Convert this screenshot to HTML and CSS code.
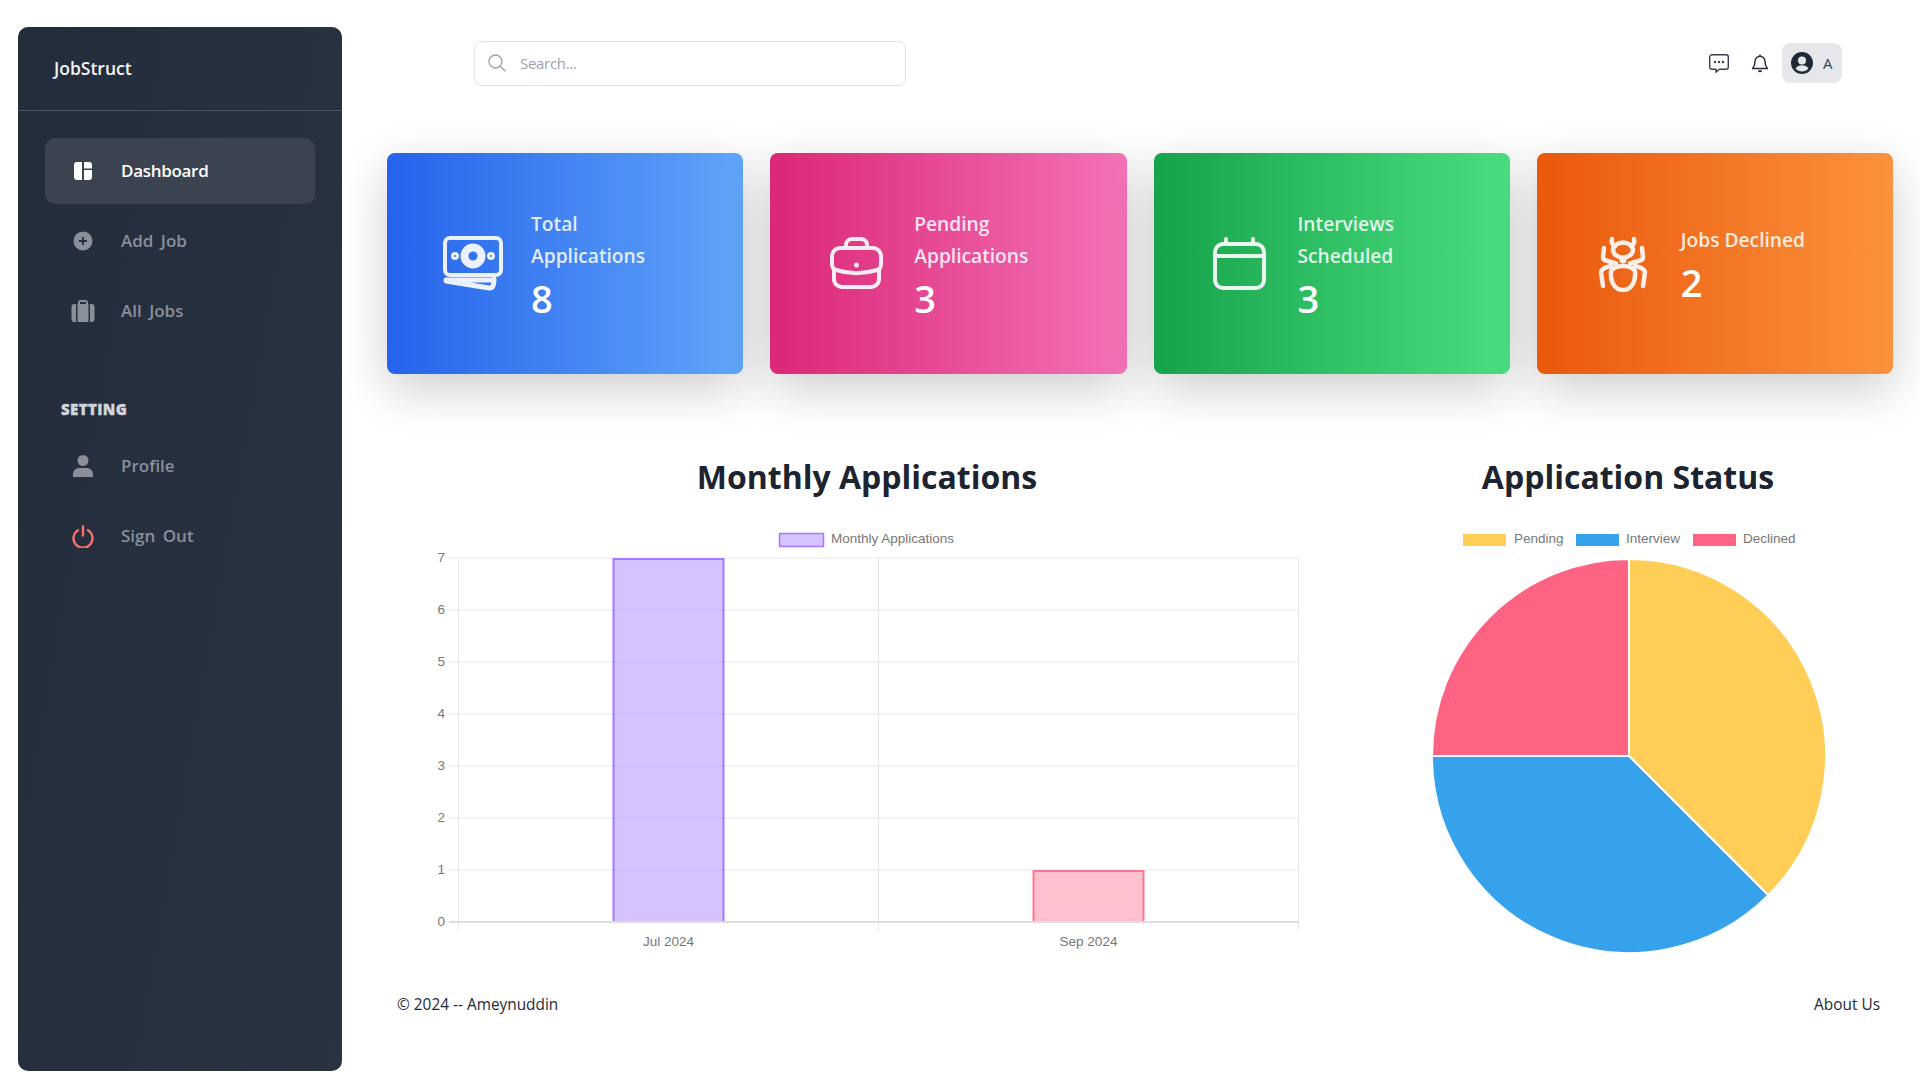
FILE: index.html
```html
<!DOCTYPE html>
<html lang="en">
<head>
    <meta charset="UTF-8">
    <meta name="viewport" content="width=device-width, initial-scale=1.0">
    <title>JobStruct</title>
    <link rel="stylesheet" href="styles.css">
</head>
<body>
    <div class="page">
        <aside class="sidebar">
            <div class="brand">JobStruct</div>
            <nav class="nav">
                <a class="nav-item active">
                    <span class="nav-icon">
                        <svg width="18" height="18" viewBox="0 0 18 18" fill="currentColor"><path d="M3 0h5v18H3a3 3 0 0 1-3-3V3a3 3 0 0 1 3-3z"/><path d="M10 0h5a3 3 0 0 1 3 3v3.500h-8z"/><path d="M10 8h8v7a3 3 0 0 1-3 3h-5z"/></svg>
                    </span>
                    <span class="nav-label">Dashboard</span>
                </a>
                <a class="nav-item">
                    <span class="nav-icon">
                        <svg width="20" height="20" viewBox="0 0 20 20"><circle cx="10" cy="10" r="9.500" fill="currentColor"/><path d="M10 6v8M6 10h8" stroke="#252e3d" stroke-width="1.800"/></svg>
                    </span>
                    <span class="nav-label">Add Job</span>
                </a>
                <a class="nav-item">
                    <span class="nav-icon">
                        <svg width="24" height="22" viewBox="0 0 24 22" fill="currentColor"><path d="M5 4H3.500A3 3 0 0 0 .5 7v12a3 3 0 0 0 3 3H5z"/><path d="M19 4h1.500a3 3 0 0 1 3 3v12a3 3 0 0 1-3 3H19z"/><path d="M7 4V2.500A2.500 2.500 0 0 1 9.500 0h5A2.500 2.500 0 0 1 17 2.500V4h.5v18h-11V4zm2 0h6V2.500a.5.5 0 0 0-.5-.5h-5a.5.5 0 0 0-.5.5z"/></svg>
                    </span>
                    <span class="nav-label">All Jobs</span>
                </a>
                <div class="nav-heading">SETTING</div>
                <a class="nav-item">
                    <span class="nav-icon">
                        <svg width="20" height="22" viewBox="0 0 20 22" fill="currentColor"><circle cx="10" cy="5.500" r="5.500"/><path d="M0 22v-3a6 6 0 0 1 6-6h8a6 6 0 0 1 6 6v3z"/></svg>
                    </span>
                    <span class="nav-label">Profile</span>
                </a>
                <a class="nav-item">
                    <span class="nav-icon danger">
                        <svg width="22" height="23" viewBox="0 0 22 23" fill="none" stroke="currentColor" stroke-width="2.400" stroke-linecap="round"><path d="M11 1.500v9"/><path d="M6 5.200a9.500 9.500 0 1 0 10 0"/></svg>
                    </span>
                    <span class="nav-label">Sign Out</span>
                </a>
            </nav>
        </aside>

        <main class="main">
            <header class="topbar">
                <label class="search">
                    <svg width="18" height="18" viewBox="0 0 18 18" fill="none" stroke="#9ca3af" stroke-width="1.400"><circle cx="7.500" cy="7.500" r="6.500"/><path d="M12.300 12.300l5 5"/></svg>
                    <input type="text" placeholder="Search...">
                </label>
                <div class="top-actions">
                    <svg class="chat-icon" width="20" height="19" viewBox="0 0 20 19" fill="none" stroke="#374151" stroke-width="1.400"><path d="M3 .7h14A2.300 2.300 0 0 1 19.300 3v10a2.300 2.300 0 0 1-2.300 2.300h-6.500L7 18v-2.700H3A2.300 2.300 0 0 1 .7 13V3A2.300 2.300 0 0 1 3 .7z"/><circle cx="6" cy="8" r="1.200" fill="#374151" stroke="none"/><circle cx="10" cy="8" r="1.200" fill="#374151" stroke="none"/><circle cx="14" cy="8" r="1.200" fill="#374151" stroke="none"/></svg>
                    <svg class="bell-icon" width="16" height="19" viewBox="0 0 16 19" fill="none" stroke="#1f2937" stroke-width="1.400"><path d="M8 2.200a5 5 0 0 0-5 5c0 4-1 5.600-2.300 7.300h14.600C14 12.800 13 11.200 13 7.200a5 5 0 0 0-5-5z"/><path d="M8 .5v1.700"/><path d="M6.500 16.500a1.600 1.600 0 0 0 3 0" fill="#1f2937"/></svg>
                    <button class="user-btn">
                        <svg width="22" height="22" viewBox="0 0 22 22"><circle cx="11" cy="11" r="11" fill="#1f2937"/><circle cx="11" cy="8.500" r="4" fill="#e5e7eb"/><path d="M4.500 16.500c1.500-2.500 3.800-3.300 6.500-3.300s5 .8 6.500 3.300c-1.700 2-4 3-6.500 3s-4.800-1-6.500-3z" fill="#e5e7eb"/></svg>
                        <span>A</span>
                    </button>
                </div>
            </header>

            <section class="stats">
                <div class="stat-card blue">
                    <div class="stat-icon">
                        <svg width="60" height="55" viewBox="0 0 60 55" fill="none" stroke="currentColor" stroke-width="4" stroke-linecap="round"><rect x="2" y="2" width="56" height="37" rx="5"/><circle cx="30" cy="20" r="8.500" stroke-width="8"/><circle cx="12" cy="20" r="2.500" stroke-width="3"/><circle cx="48" cy="20" r="2.500" stroke-width="3"/><path d="M3 44h48M3 45l43 7c4 .5 5-3 5-9" stroke-width="5"/></svg>
                    </div>
                    <div class="stat-text">
                        <div class="stat-label">Total<br>Applications</div>
                        <div class="stat-value">8</div>
                    </div>
                </div>
                <div class="stat-card pink">
                    <div class="stat-icon">
                        <svg width="53" height="53" viewBox="0 0 53 53" fill="none" stroke="currentColor" stroke-width="4" stroke-linecap="round"><path d="M10 11h33a8 8 0 0 1 8 8v8c0 3-1 5-4 6-13 4-28 4-41 0-3-1-4-3-4-6v-8a8 8 0 0 1 8-8z"/><path d="M4 33v10a8 8 0 0 0 8 7h29a8 8 0 0 0 8-7V33"/><path d="M16 11V8a6 6 0 0 1 6-6h9a6 6 0 0 1 6 6v3"/><circle cx="26.500" cy="28" r="2.500" fill="currentColor" stroke="none"/></svg>
                    </div>
                    <div class="stat-text">
                        <div class="stat-label">Pending<br>Applications</div>
                        <div class="stat-value">3</div>
                    </div>
                </div>
                <div class="stat-card green">
                    <div class="stat-icon">
                        <svg width="53" height="53" viewBox="0 0 53 53" fill="none" stroke="currentColor" stroke-width="4" stroke-linecap="round"><rect x="2" y="7" width="49" height="44" rx="8"/><path d="M2 19h49"/><path d="M13 2v5M40 2v5"/></svg>
                    </div>
                    <div class="stat-text">
                        <div class="stat-label">Interviews<br>Scheduled</div>
                        <div class="stat-value">3</div>
                    </div>
                </div>
                <div class="stat-card orange">
                    <div class="stat-icon">
                        <svg width="50" height="58" viewBox="0 0 50 58" fill="none" stroke="currentColor" stroke-width="4.500" stroke-linecap="round" stroke-linejoin="round"><path d="M14 4c-1 4 1 6 3 7M36 4c1 4-1 6-3 7"/><ellipse cx="25" cy="15" rx="10" ry="7.500"/><path d="M6 13l-1 9c0 2 1 3 3 3.500l10 3M44 13l1 9c0 2-1 3-3 3.500l-10 3"/><circle cx="25" cy="25" r="3.500" fill="currentColor" stroke="none"/><path d="M13 31c-5 1-9 3-10 6l2 14M37 31c5 1 9 3 10 6l-2 14"/><path d="M13 36c-1 11 4 19 12 19s13-8 12-19c-2-3-6-5-12-5s-10 2-12 5z"/></svg>
                    </div>
                    <div class="stat-text">
                        <div class="stat-label">Jobs Declined</div>
                        <div class="stat-value">2</div>
                    </div>
                </div>
            </section>

            <section class="charts">
                <div class="chart-block">
                    <h2>Monthly Applications</h2>
                    <svg class="chart" width="960" height="440" viewBox="387 520 960 440">
                        <g class="grid">
                            <path d="M449 558H1298M449 610H1298M449 662H1298M449 714H1298M449 766H1298M449 818H1298M449 870H1298"/>
                            <path d="M458.500 558V931M878.500 558V931M1298.500 558V931"/>
                            <path class="zero" d="M449 922H1298"/>
                        </g>
                        <path d="M613.500 921V559H723.500V921" fill="#9966ff" fill-opacity="0.4" stroke="#9966ff" stroke-opacity="0.85" stroke-width="2"/>
                        <path d="M1033.500 921V871H1143.500V921" fill="#ff6384" fill-opacity="0.4" stroke="#ff6384" stroke-opacity="0.85" stroke-width="2"/>
                        <g class="tick-labels" text-anchor="end">
                            <text x="445" y="562">7</text>
                            <text x="445" y="614">6</text>
                            <text x="445" y="666">5</text>
                            <text x="445" y="718">4</text>
                            <text x="445" y="770">3</text>
                            <text x="445" y="822">2</text>
                            <text x="445" y="874">1</text>
                            <text x="445" y="926">0</text>
                        </g>
                        <g class="tick-labels" text-anchor="middle">
                            <text x="668.500" y="946">Jul 2024</text>
                            <text x="1088.500" y="946">Sep 2024</text>
                        </g>
                        <rect x="779.500" y="533.500" width="44" height="13" fill="#9966ff" fill-opacity="0.4" stroke="#9966ff" stroke-opacity="0.85" stroke-width="1.500"/>
                        <text class="tick-labels" x="831" y="543">Monthly Applications</text>
                    </svg>
                </div>
                <div class="chart-block">
                    <h2>Application Status</h2>
                    <svg class="chart" width="530" height="440" viewBox="1363 520 530 440">
                        <rect x="1463" y="534" width="43" height="12" fill="#ffce56"/>
                        <text class="tick-labels" x="1514" y="543">Pending</text>
                        <rect x="1576" y="534" width="43" height="12" fill="#36a2eb"/>
                        <text class="tick-labels" x="1626" y="543">Interview</text>
                        <rect x="1693" y="534" width="43" height="12" fill="#ff6384"/>
                        <text class="tick-labels" x="1743" y="543">Declined</text>
                        <g stroke="#fff" stroke-width="2" stroke-linejoin="round">
                            <path d="M1629 756V559A197 197 0 0 1 1768.300 895.300Z" fill="#ffce56"/>
                            <path d="M1629 756L1768.300 895.300A197 197 0 0 1 1432 756Z" fill="#36a2eb"/>
                            <path d="M1629 756H1432A197 197 0 0 1 1629 559Z" fill="#ff6384"/>
                        </g>
                    </svg>
                </div>
            </section>

            <footer class="footer">
                <span>© 2024 -- Ameynuddin</span>
                <span>About Us</span>
            </footer>
        </main>
    </div>
</body>
</html>
```

FILE: styles.css
```css
* {
    box-sizing: border-box;
}
html, body {
    margin: 0;
    height: 100%;
}
body {
    font-family: 'Open Sans', 'Noto Sans', sans-serif;
    background-color: #fff;
    color: #1f2937;
    overflow: hidden;
}
.page {
    display: flex;
    height: 1080px;
}

/* sidebar */
.sidebar {
    flex: 0 0 324px;
    height: 1044px;
    margin: 27px 0 0 18px;
    border-radius: 10px;
    background: linear-gradient(100deg, #232c3b, #2a3441);
}
.brand {
    height: 84px;
    padding: 27px 0 0 36px;
    font-size: 17.500px;
    font-weight: 600;
    line-height: 28px;
    color: #f3f4f6;
    border-bottom: 1px solid #4b5563;
}
.nav {
    display: flex;
    flex-direction: column;
    gap: 4px;
    padding: 27px 27px 0;
}
.nav-item {
    display: flex;
    align-items: center;
    height: 66px;
    border-radius: 10px;
    font-size: 17px;
    font-weight: 600;
    word-spacing: 3px;
    color: #8a8f9a;
}
.nav-label {
    margin-bottom: 2px;
}
.nav-item.active {
    background-color: #3b4351;
    color: #fff;
    letter-spacing: -0.3px;
}
.nav-icon {
    display: flex;
    justify-content: center;
    align-items: center;
    width: 76px;
    color: #8a8f9a;
}
.active .nav-icon {
    color: #fff;
}
.nav-icon.danger {
    color: #f87171;
}
.nav-heading {
    margin: 47px 0 0 16px;
    height: 34px;
    font-size: 15px;
    font-weight: 800;
    line-height: 28px;
    letter-spacing: 0.4px;
    color: #d1d5db;
    -webkit-text-stroke: 0.4px #d1d5db;
}

/* main */
.main {
    flex: 1;
    min-width: 0;
    margin-left: 45px;
    margin-right: 27px;
}
.topbar {
    display: flex;
    justify-content: space-between;
    align-items: center;
    height: 126px;
    padding: 0 51px 0 87px;
}
.search {
    display: flex;
    align-items: center;
    gap: 12px;
    width: 432px;
    height: 45px;
    padding: 0 13px;
    border: 1px solid #e1e3e8;
    border-radius: 8px;
}
.search input {
    flex: 1;
    border: none;
    outline: none;
    font-family: inherit;
    font-size: 15px;
    letter-spacing: -0.3px;
}
.search input::placeholder {
    color: #9ca3af;
}
.top-actions {
    display: flex;
    align-items: center;
}
.chat-icon {
    margin-right: 23px;
}
.bell-icon {
    margin-right: 14px;
}
.user-btn {
    display: flex;
    align-items: center;
    gap: 10px;
    width: 60px;
    height: 40px;
    padding: 0 9px;
    border: none;
    border-radius: 8px;
    background-color: #e5e7eb;
    font-family: inherit;
    font-size: 15px;
    color: #374151;
}

/* stat cards */
.stats {
    display: grid;
    grid-template-columns: repeat(4, 1fr);
    gap: 27px;
    margin-top: 27px;
}
.stat-card {
    display: flex;
    align-items: center;
    height: 221px;
    padding-left: 46px;
    border-radius: 8px;
    box-shadow: 0 15px 50px rgba(0, 0, 0, 0.2);
    color: #fff;
}
.stat-card.blue {
    background: linear-gradient(to right, #2563eb, #60a5fa);
}
.stat-card.pink {
    background: linear-gradient(to right, #db2777, #f472b6);
}
.stat-card.green {
    background: linear-gradient(to right, #16a34a, #4ade80);
}
.stat-card.orange {
    background: linear-gradient(to right, #ea580c, #fb923c);
}
.stat-icon {
    display: flex;
    justify-content: center;
    flex: 0 0 80px;
    margin-right: 18px;
    opacity: 0.9;
}
.stat-text {
    padding-top: 6px;
}
.stat-label {
    font-size: 19.200px;
    font-weight: 600;
    line-height: 32px;
    opacity: 0.85;
}
.stat-value {
    margin-top: -1px;
    font-size: 38px;
    font-weight: 600;
    line-height: 54px;
}

/* charts */
.charts {
    display: grid;
    grid-template-columns: 960px 530px;
    gap: 16px;
    margin-top: 80px;
}
.chart-block h2 {
    margin: 0 0 20px;
    font-size: 32px;
    font-weight: 700;
    line-height: 46px;
    text-align: center;
    color: #1c2430;
}
.chart {
    display: block;
}
.grid path {
    fill: none;
    stroke: #e8e8e8;
    stroke-width: 1;
}
.grid .zero {
    stroke: #dedede;
    stroke-width: 2;
}
.tick-labels {
    font-family: 'Liberation Sans', Arial, sans-serif;
    font-size: 13.500px;
    fill: #777;
}

/* footer */
.footer {
    display: flex;
    justify-content: space-between;
    margin-top: 33px;
    padding: 0 13px 0 10px;
    font-size: 15.400px;
    line-height: 24px;
    color: #1f2937;
}
```
